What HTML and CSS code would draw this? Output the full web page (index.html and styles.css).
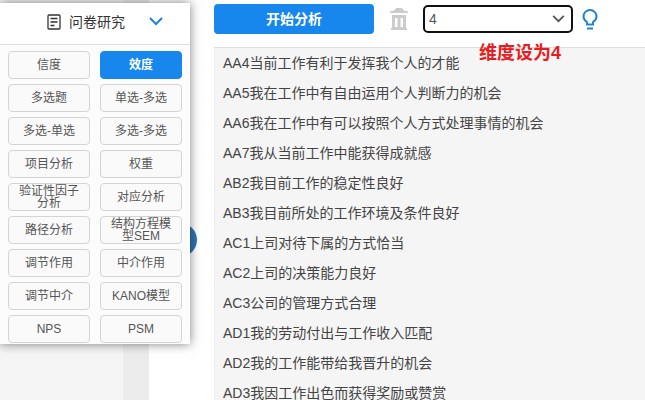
FILE: index.html
```html
<!DOCTYPE html>
<html lang="zh-CN">
<head>
<meta charset="utf-8">
<title>问卷研究</title>
<link rel="stylesheet" href="styles.css">
</head>
<body>
<div class="app">
  <aside class="sidebar">
    <div class="rail"></div>
    <span class="handle"></span>
    <nav class="menu">
      <button class="menu-head" type="button">
        <svg class="doc" viewBox="0 0 14 16" fill="none" stroke="#333" stroke-width="1.3"><rect x="1" y="1" width="12" height="14" rx="1"/><path d="M3.5 4.5h7M3.5 8h7M3.5 11.500h4"/></svg>
        <span>问卷研究</span>
        <svg class="chevron" viewBox="0 0 14 9" fill="none" stroke="#1c84dc" stroke-width="2"><path d="M1 1l6 6 6-6"/></svg>
      </button>
      <div class="methods">
        <button class="method" type="button">信度</button>
        <button class="method active" type="button">效度</button>
        <button class="method" type="button">多选题</button>
        <button class="method" type="button">单选-多选</button>
        <button class="method" type="button">多选-单选</button>
        <button class="method" type="button">多选-多选</button>
        <button class="method" type="button">项目分析</button>
        <button class="method" type="button">权重</button>
        <button class="method" type="button">验证性因子分析</button>
        <button class="method" type="button">对应分析</button>
        <button class="method" type="button">路径分析</button>
        <button class="method" type="button">结构方程模型SEM</button>
        <button class="method" type="button">调节作用</button>
        <button class="method" type="button">中介作用</button>
        <button class="method" type="button">调节中介</button>
        <button class="method" type="button">KANO模型</button>
        <button class="method" type="button">NPS</button>
        <button class="method" type="button">PSM</button>
      </div>
    </nav>
  </aside>
  <main class="main">
    <div class="toolbar">
      <button class="run" type="button">开始分析</button>
      <button class="icon-button" type="button" aria-label="清空">
        <svg class="trash" viewBox="0 0 20 22" fill="#ccc"><path d="M7 0h6l2 2.500 4 1V5H1V3.500l4-1z"/><path fill-rule="evenodd" d="M3 7h14v13h1v2H2v-2h1zM6 10v9h2.500v-9zM11.500 10v9H14v-9z"/></svg>
      </button>
      <select class="dimension" aria-label="维度">
        <option>4</option>
      </select>
      <button class="icon-button" type="button" aria-label="提示">
        <svg class="bulb" viewBox="0 0 16 21" fill="none" stroke="#2184cf" stroke-width="2"><path d="M5 15.500v-2.500C2.500 11.500 1.500 9.800 1.500 7.500a6.500 6.500 0 0 1 13 0c0 2.300-1 4-3.500 5.500v2.500zM5 19.500h6"/></svg>
      </button>
    </div>
    <ul class="variables">
      <li>AA4当前工作有利于发挥我个人的才能</li>
      <li>AA5我在工作中有自由运用个人判断力的机会</li>
      <li>AA6我在工作中有可以按照个人方式处理事情的机会</li>
      <li>AA7我从当前工作中能获得成就感</li>
      <li>AB2我目前工作的稳定性良好</li>
      <li>AB3我目前所处的工作环境及条件良好</li>
      <li>AC1上司对待下属的方式恰当</li>
      <li>AC2上司的决策能力良好</li>
      <li>AC3公司的管理方式合理</li>
      <li>AD1我的劳动付出与工作收入匹配</li>
      <li>AD2我的工作能带给我晋升的机会</li>
      <li>AD3我因工作出色而获得奖励或赞赏</li>
    </ul>
    <strong class="note">维度设为4</strong>
  </main>
</div>
</body>
</html>
```

FILE: styles.css
```css
* {
  box-sizing: border-box;
}

body {
  margin: 0;
  overflow: hidden;
  background: #fff;
  color: #444;
  font: 14px/30px "Liberation Sans", "Noto Sans CJK SC", sans-serif;
}

button {
  padding: 0;
  border: 0;
  background: none;
  color: inherit;
  font: inherit;
}

svg {
  display: block;
}

.app {
  display: flex;
  height: 100vh;
}

.sidebar {
  position: relative;
  flex: none;
  width: 149px;
  margin-right: 65px;
  background: #f5f5f5;
}

.rail {
  width: 26px;
  height: 100%;
  margin-left: auto;
  background: #ececec;
}

.handle {
  position: absolute;
  top: 223px;
  left: 163px;
  width: 34px;
  height: 34px;
  border-radius: 50%;
  background: #2e74b8;
}

.menu {
  position: absolute;
  top: 3px;
  left: 0;
  width: 190px;
  padding-bottom: 1px;
  background: #fcfcfc;
  box-shadow: 0 0 10px rgba(0, 0, 0, 0.5);
}

.menu-head {
  display: flex;
  align-items: center;
  width: 100%;
  height: 42px;
  padding: 0 27px 4px 47px;
  border-bottom: 1px solid #ddd;
  background: #fff;
  color: #333;
}

.doc {
  width: 14px;
  height: 16px;
  margin-right: 8px;
}

.chevron {
  width: 14px;
  height: 9px;
  margin-left: auto;
}

.methods {
  display: grid;
  grid-template-columns: 1fr 1fr;
  gap: 5px 10px;
  padding: 6px 8px 0;
}

.method {
  height: 28px;
  padding: 0 8px;
  border: 1px solid #d4d4d4;
  border-radius: 4px;
  background: #fafafa;
  color: #555;
  font-size: 12px;
  line-height: 12px;
}

.method.active {
  border-color: #1787ee;
  background: #1787ee;
  color: #fff;
  font-weight: bold;
}

.main {
  position: relative;
  flex: 1;
  min-width: 0;
}

.toolbar {
  display: flex;
  align-items: center;
  height: 47px;
  padding-bottom: 9px;
}

.run {
  width: 160px;
  height: 30px;
  border-radius: 4px;
  background: #1787ee;
  color: #fff;
  font-weight: bold;
}

.icon-button {
  flex: none;
}

.trash {
  width: 20px;
  height: 22px;
  margin: 0 14px 0 15px;
}

.dimension {
  appearance: none;
  width: 150px;
  height: 28px;
  padding: 0 4px;
  border: 2px solid #111;
  border-radius: 5px;
  background: #fff url("data:image/svg+xml,%3Csvg xmlns='http://www.w3.org/2000/svg' viewBox='0 0 14 9' fill='none' stroke='%23555' stroke-width='2'%3E%3Cpath d='M1 1l6 6 6-6'/%3E%3C/svg%3E") no-repeat right 6px center / 13px 8px;
  color: #555;
  font: inherit;
  line-height: 22px;
}

.bulb {
  width: 16px;
  height: 21px;
  margin-left: 9px;
}

.variables {
  height: calc(100vh - 47px);
  margin: 0;
  padding: 0 8px;
  overflow: hidden;
  border-top: 1px solid #ddd;
  border-left: 1px solid #eee;
  background: #f5f5f5;
  list-style: none;
}

.note {
  position: absolute;
  top: 38px;
  left: 265px;
  color: #e61e23;
  font-size: 18px;
}
```
